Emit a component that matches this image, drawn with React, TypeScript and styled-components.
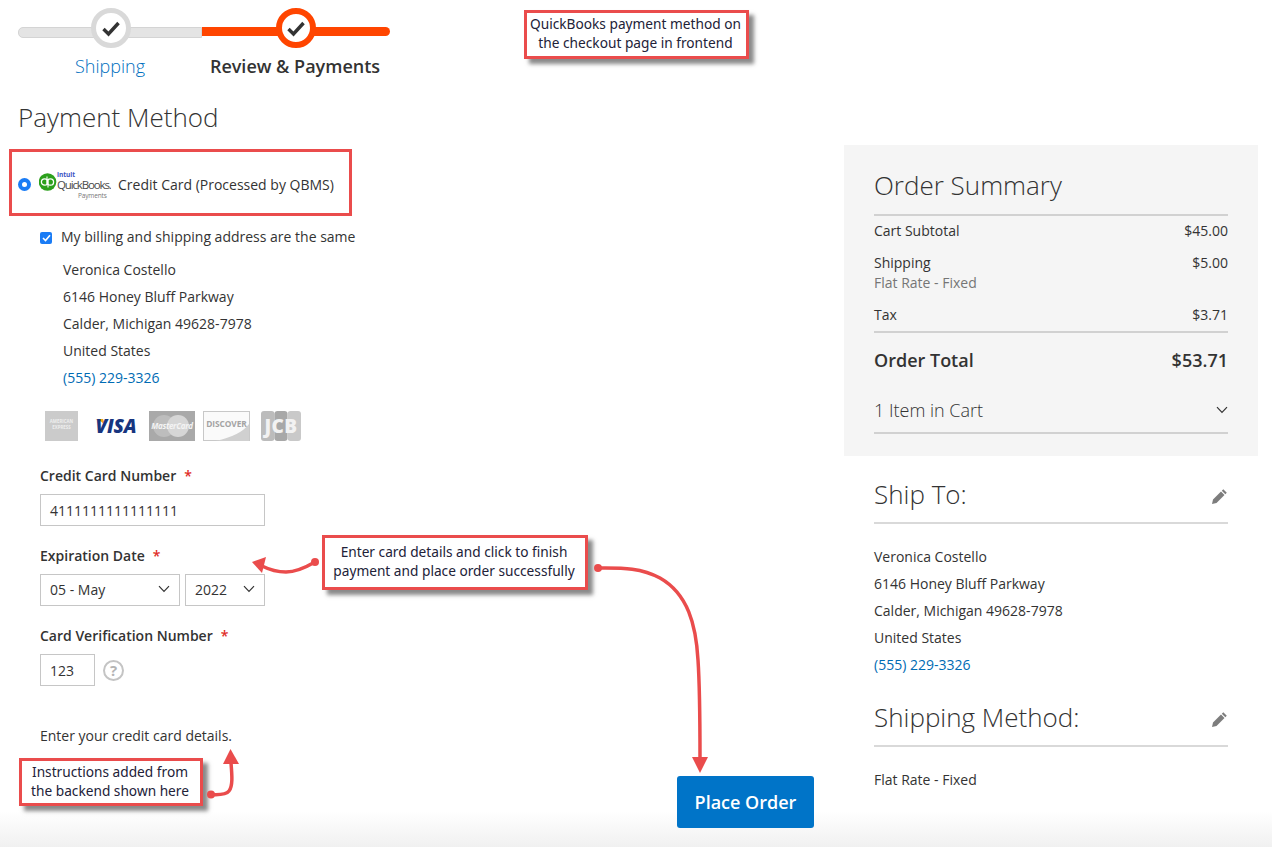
import React from "react";
import styled, { createGlobalStyle } from "styled-components";

const Global = createGlobalStyle`
  html, body { margin: 0; padding: 0; background: #fff; }
  body { font-family: "Open Sans", "Noto Sans", sans-serif; color: #333; font-size: 14px; }
  * { box-sizing: border-box; }
`;

const Page = styled.div`
  position: relative;
  width: 1272px;
  height: 847px;
  overflow: hidden;
  background: #fff;
  display: grid;
  grid-template-columns: 844px 414px;
`;

const Main = styled.main`
  padding-left: 18px;
  display: flex;
  flex-direction: column;
`;

const Stepper = styled.div`
  position: relative;
  width: 372px;
  height: 82px;
  display: grid;
  grid-template-columns: 184px 188px;
`;

const Step = styled.div<{ $active?: boolean }>`
  position: relative;
  padding-top: 53px;
  padding-right: ${(p) => (p.$active ? "2px" : "0")};
  text-align: center;
  font-size: 18px;
  line-height: 26px;
  font-weight: ${(p) => (p.$active ? 600 : 300)};
  color: ${(p) => (p.$active ? "#333" : "#0070c0")};
  &::before {
    content: "";
    position: absolute;
    left: 0;
    right: 0;
    top: 27px;
    height: 9px;
    background: ${(p) => (p.$active ? "#ff4500" : "#e4e4e4")};
    border: ${(p) => (p.$active ? "0" : "1px solid #d4d4d4")};
    border-radius: ${(p) => (p.$active ? "0 5px 5px 0" : "5px 0 0 5px")};
  }
`;

const StepMark = styled.span<{ $active?: boolean }>`
  position: absolute;
  top: 8px;
  left: ${(p) => (p.$active ? "74px" : "73px")};
  width: 40px;
  height: 40px;
  border-radius: 50%;
  background: #fff;
  border: ${(p) => (p.$active ? "6px solid #ff4500" : "5px solid #d9d9d9")};
  display: flex;
  align-items: center;
  justify-content: center;
`;

const Heading = styled.h1`
  margin: 0;
  font-size: 26px;
  line-height: 36px;
  font-weight: 300;
  color: #333;
`;

const PageHeading = styled(Heading)`
  margin-top: 17px;
`;

const MethodRow = styled.div`
  margin-top: 24px;
  height: 50px;
  display: flex;
  align-items: center;
  gap: 8px;
  font-size: 14px;
`;

const Radio = styled.span`
  width: 13px;
  height: 13px;
  border-radius: 50%;
  background: #1a7cf5;
  display: flex;
  align-items: center;
  justify-content: center;
  &::after {
    content: "";
    width: 5px;
    height: 5px;
    border-radius: 50%;
    background: #fff;
  }
`;

const MethodLabel = styled.span`
  margin-left: -1px;
`;

const Body = styled.div`
  padding-left: 22px;
  display: flex;
  flex-direction: column;
`;

const CheckRow = styled.label`
  margin-top: 15px;
  height: 24px;
  display: flex;
  align-items: center;
  gap: 9px;
`;

const Check = styled.span`
  width: 12px;
  height: 12px;
  border-radius: 2px;
  background: #1a7cf5;
  display: flex;
  align-items: center;
  justify-content: center;
  margin-top: 3px;
`;

const Address = styled.address`
  font-style: normal;
  line-height: 27px;
`;

const BillingAddress = styled(Address)`
  margin-top: 8px;
  padding-left: 23px;
`;

const Phone = styled.a`
  color: #006bb4;
  display: block;
`;

const Cards = styled.div`
  margin-top: 19px;
  height: 32px;
  display: flex;
  align-items: center;
  margin-left: 5px;
`;

const Field = styled.div`
  display: flex;
  flex-direction: column;
  height: 80px;
`;

const FirstField = styled(Field)`
  margin-top: 24px;
`;

const Label = styled.label`
  height: 20px;
  line-height: 20px;
  margin: 0 0 8px;
  font-weight: 600;
  font-size: 14px;
  &::after {
    content: "*";
    color: #e02b27;
    margin-left: 8px;
    font-size: 14px;
  }
`;

const Control = styled.div<{ $w: number }>`
  width: ${(p) => p.$w}px;
  height: 32px;
  border: 1px solid #c6c6c6;
  background: #fff;
  padding: 0 9px;
  display: flex;
  align-items: center;
  justify-content: space-between;
  font-size: 14px;
  color: #333;
`;

const Select = styled(Control)`
  padding-bottom: 2px;
`;

const Inline = styled.div`
  display: flex;
  align-items: center;
  gap: 5px;
`;

const CvvRow = styled(Inline)`
  gap: 8px;
`;

const Help = styled.span`
  width: 21px;
  height: 21px;
  border-radius: 50%;
  border: 2px solid #c4c4c4;
  color: #b4b4b4;
  font-weight: 700;
  font-size: 15px;
  line-height: 17px;
  text-align: center;
`;

const Instructions = styled.p`
  margin: 20px 0 0;
  line-height: 20px;
`;

const Actions = styled.div`
  margin-top: 30px;
  padding-right: 30px;
  display: flex;
  justify-content: flex-end;
`;

const PlaceOrder = styled.button`
  position: relative;
  z-index: 1;
  width: 137px;
  height: 52px;
  border: 0;
  border-radius: 3px;
  background: #0074c8;
  color: #fff;
  font: 600 18px "Open Sans", sans-serif;
`;

const Side = styled.aside`
  padding-top: 145px;
  display: flex;
  flex-direction: column;
`;

const Summary = styled.section`
  height: 311px;
  background: #f5f5f5;
  padding: 22px 30px 0;
`;

const SectionTitle = styled(Heading)`
  height: 49px;
  border-bottom: 2px solid #d1d1d1;
`;

const Row = styled.div<{ $h: number; $pad?: number; $rule?: boolean }>`
  height: ${(p) => p.$h}px;
  display: flex;
  justify-content: space-between;
  line-height: 20px;
  padding-top: ${(p) => p.$pad ?? 6}px;
  border-bottom: ${(p) => (p.$rule ? "2px solid #d1d1d1" : "0")};
`;

const Muted = styled.div`
  color: #757575;
`;

const TotalRow = styled.div`
  height: 54px;
  display: flex;
  justify-content: space-between;
  align-items: center;
  font-size: 18px;
  font-weight: 600;
`;

const CartRow = styled.div`
  height: 47px;
  display: flex;
  justify-content: space-between;
  align-items: center;
  font-size: 18px;
  font-weight: 300;
  border-bottom: 2px solid #d1d1d1;
`;

const Block = styled.section`
  padding: 0 30px;
  margin-top: 20px;
`;

const BlockTitle = styled.div`
  height: 48px;
  display: flex;
  justify-content: space-between;
  align-items: flex-start;
  border-bottom: 2px solid #d9d9d9;
`;

const EditIcon = styled.svg`
  margin-top: 12px;
`;

const ShipAddress = styled(Address)`
  margin: 19px 0 1px;
`;

const MethodText = styled.div`
  margin-top: 23px;
  line-height: 20px;
`;

const Note = styled.div<{ $x: number; $y: number; $w: number; $h: number; $plain?: boolean }>`
  position: absolute;
  left: ${(p) => p.$x}px;
  top: ${(p) => p.$y}px;
  width: ${(p) => p.$w}px;
  height: ${(p) => p.$h}px;
  border: 3px solid #ea4c4c;
  background: ${(p) => (p.$plain ? "transparent" : "#fff")};
  box-shadow: ${(p) => (p.$plain ? "none" : "5px 5px 4px rgba(60,60,60,.6)")};
  display: flex;
  align-items: center;
  justify-content: center;
  text-align: center;
  padding: 0 2px 3px 0;
  font-family: "Noto Sans", "Open Sans", sans-serif;
  font-size: 13.7px;
  line-height: 19px;
  color: #222238;
`;

const Overlay = styled.svg`
  position: absolute;
  inset: 0;
  pointer-events: none;
`;

const BottomFade = styled.div`
  position: absolute;
  left: 0;
  right: 0;
  bottom: 0;
  height: 36px;
  background: linear-gradient(to bottom, rgba(238,238,238,0), rgba(238,238,238,.85));
  pointer-events: none;
`;

const Tick = () => (
  <svg width="20" height="17" viewBox="0 0 20 17">
    <path d="M2.5 9 L7.5 14 L17.5 3" fill="none" stroke="#333" strokeWidth="3.4" />
  </svg>
);

const Chevron = () => (
  <svg width="12" height="8" viewBox="0 0 12 8">
    <path d="M1 1.2 L6 6.4 L11 1.2" fill="none" stroke="#333" strokeWidth="1.2" />
  </svg>
);

const Pencil = () => (
  <EditIcon width="17" height="17" viewBox="0 0 17 17">
    <path d="M12.3 1.2 L15.8 4.7 L14.3 6.2 L10.8 2.7 Z M10 3.5 L13.5 7 L5.5 15 L1 16 L2 11.5 Z" fill="#7d7d7d" />
  </EditIcon>
);

const QuickBooksLogo = () => (
  <svg width="72" height="32" viewBox="0 0 72 32">
    <circle cx="8.5" cy="14" r="8.8" fill="#2ca01c" />
    <circle cx="5.600" cy="14" r="3.200" fill="none" stroke="#fff" strokeWidth="1.3" />
    <circle cx="11.400" cy="14" r="3.200" fill="none" stroke="#fff" strokeWidth="1.3" />
    <path d="M8 8.500v8M9 11.500v8" stroke="#fff" strokeWidth="1.1" />
    <text x="18" y="9" fontFamily="Open Sans" fontWeight="700" fontSize="6.5" fill="#3a55c4">intuit</text>
    <text x="18" y="21" fontFamily="Open Sans" fontWeight="400" fontSize="11.5" letterSpacing="-1.15" fill="#4a4a4a">QuickBooks.</text>
    <text x="39" y="29.500" fontFamily="Open Sans" fontSize="6.5" fill="#777" letterSpacing="-0.15">Payments</text>
  </svg>
);

const CardIcons = () => (
  <svg width="260" height="32" viewBox="0 0 260 32">
    <rect x="0" y="1" width="33" height="30" fill="#cbcbcb" />
    <text x="16.500" y="13" textAnchor="middle" fontFamily="Open Sans" fontSize="4.400" fontWeight="700" fill="#eee">AMERICAN</text>
    <text x="16.500" y="19" textAnchor="middle" fontFamily="Open Sans" fontSize="4.400" fontWeight="700" fill="#eee">EXPRESS</text>
    <path d="M50.500 9 L58 9 L60.500 16 Q57 11 50.500 9Z" fill="#f4a51c" />
    <text x="50.500" y="23" fontFamily="Open Sans" fontWeight="800" fontStyle="italic" fontSize="19" fill="#17357f" letterSpacing="-0.2">VISA</text>
    <rect x="104" y="1" width="46" height="30" fill="#a9a9a9" />
    <circle cx="119" cy="16" r="11" fill="#bdbdbd" />
    <circle cx="133" cy="16" r="11" fill="#d6d6d6" />
    <text x="127" y="19" textAnchor="middle" fontFamily="Open Sans" fontStyle="italic" fontWeight="700" fontSize="8" letterSpacing="-0.3" fill="#f4f4f4">MasterCard</text>
    <rect x="158.500" y="1.500" width="46" height="29" fill="#fafafa" stroke="#c8c8c8" />
    <path d="M170 31 Q195 26 204 14 L204 31 Z" fill="#d0d0d0" />
    <text x="181.500" y="17" textAnchor="middle" fontFamily="Open Sans" fontWeight="700" fontSize="8.400" letterSpacing="-0.1" fill="#a4a4a4">DISCOVER</text>
    <rect x="216" y="1" width="13.500" height="30" rx="3" fill="#bcbcbc" />
    <rect x="229.500" y="1" width="13" height="30" rx="3" fill="#a8a8a8" />
    <rect x="242.500" y="1" width="13.500" height="30" rx="3" fill="#c9c9c9" />
    <text x="236" y="23" textAnchor="middle" fontFamily="Open Sans" fontWeight="800" fontSize="19" letterSpacing="0.4" fill="#f2f2f2">JCB</text>
  </svg>
);

const addressLines = ["Veronica Costello", "6146 Honey Bluff Parkway", "Calder, Michigan 49628-7978", "United States"];

const AddressBody = () => (
  <>
    {addressLines.map((l) => (
      <div key={l}>{l}</div>
    ))}
    <Phone>(555) 229-3326</Phone>
  </>
);

export default function App() {
  return (
    <Page>
      <Global />
      <Main>
        <Stepper>
          <Step>
            Shipping
            <StepMark><Tick /></StepMark>
          </Step>
          <Step $active>
            Review &amp; Payments
            <StepMark $active><Tick /></StepMark>
          </Step>
        </Stepper>
        <PageHeading>Payment Method</PageHeading>
        <MethodRow>
          <Radio />
          <QuickBooksLogo />
          <MethodLabel>Credit Card (Processed by QBMS)</MethodLabel>
        </MethodRow>
        <Body>
          <CheckRow>
            <Check>
              <svg width="9" height="8" viewBox="0 0 9 8">
                <path d="M1 4 L3.500 6.500 L8 1.200" fill="none" stroke="#fff" strokeWidth="1.6" />
              </svg>
            </Check>
            My billing and shipping address are the same
          </CheckRow>
          <BillingAddress><AddressBody /></BillingAddress>
          <Cards><CardIcons /></Cards>
          <FirstField>
            <Label>Credit Card Number</Label>
            <Control $w={225}>4111111111111111</Control>
          </FirstField>
          <Field>
            <Label>Expiration Date</Label>
            <Inline>
              <Select $w={140}>05 - May <Chevron /></Select>
              <Select $w={80}>2022 <Chevron /></Select>
            </Inline>
          </Field>
          <Field>
            <Label>Card Verification Number</Label>
            <CvvRow>
              <Control $w={55}>123</Control>
              <Help>?</Help>
            </CvvRow>
          </Field>
          <Instructions>Enter your credit card details.</Instructions>
          <Actions><PlaceOrder>Place Order</PlaceOrder></Actions>
        </Body>
      </Main>
      <Side>
        <Summary>
          <SectionTitle>Order Summary</SectionTitle>
          <Row $h={31} $pad={5}><span>Cart Subtotal</span><span>$45.00</span></Row>
          <Row $h={52}>
            <div>Shipping<Muted>Flat Rate - Fixed</Muted></div>
            <span>$5.00</span>
          </Row>
          <Row $h={34} $rule><span>Tax</span><span>$3.71</span></Row>
          <TotalRow><span>Order Total</span><span>$53.71</span></TotalRow>
          <CartRow><span>1 Item in Cart</span><Chevron /></CartRow>
        </Summary>
        <Block>
          <BlockTitle><Heading>Ship To:</Heading><Pencil /></BlockTitle>
          <ShipAddress><AddressBody /></ShipAddress>
        </Block>
        <Block>
          <BlockTitle><Heading>Shipping Method:</Heading><Pencil /></BlockTitle>
          <MethodText>Flat Rate - Fixed</MethodText>
        </Block>
      </Side>

      <BottomFade />
      <Note $plain $x={9} $y={149} $w={343} $h={67} />
      <Note $x={524} $y={10} $w={225} $h={49}>QuickBooks payment method on<br />the checkout page in frontend</Note>
      <Note $x={322} $y={535} $w={266} $h={55}>Enter card details and click to finish<br />payment and place order successfully</Note>
      <Note $x={19} $y={758} $w={184} $h={48}>Instructions added from<br />the backend shown here</Note>

      <Overlay width="1272" height="847" viewBox="0 0 1272 847">
        <g fill="#ea4c4c" stroke="none">
          <circle cx="315" cy="562" r="4" />
          <path d="M252 562 L266 557 L262 573 Z" />
          <circle cx="598" cy="568" r="4" />
          <path d="M692 757 L708 757 L700 773 Z" />
          <circle cx="211" cy="794.500" r="4" />
          <path d="M230.500 749 L239 764 L223 764 Z" />
        </g>
        <g fill="none" stroke="#ea4c4c" strokeWidth="3.5">
          <path d="M315 562 C303 569 294 572 286 572 C277 572 270 570 262 566" />
          <path d="M598 568 C620 568 640 567 660 578 C688 594 696 625 698 660 C700 690 700 725 700 758" />
          <path d="M211 794.500 C219 795 226 795 229 791 C233 786 232 775 231 763" />
        </g>
      </Overlay>
    </Page>
  );
}
